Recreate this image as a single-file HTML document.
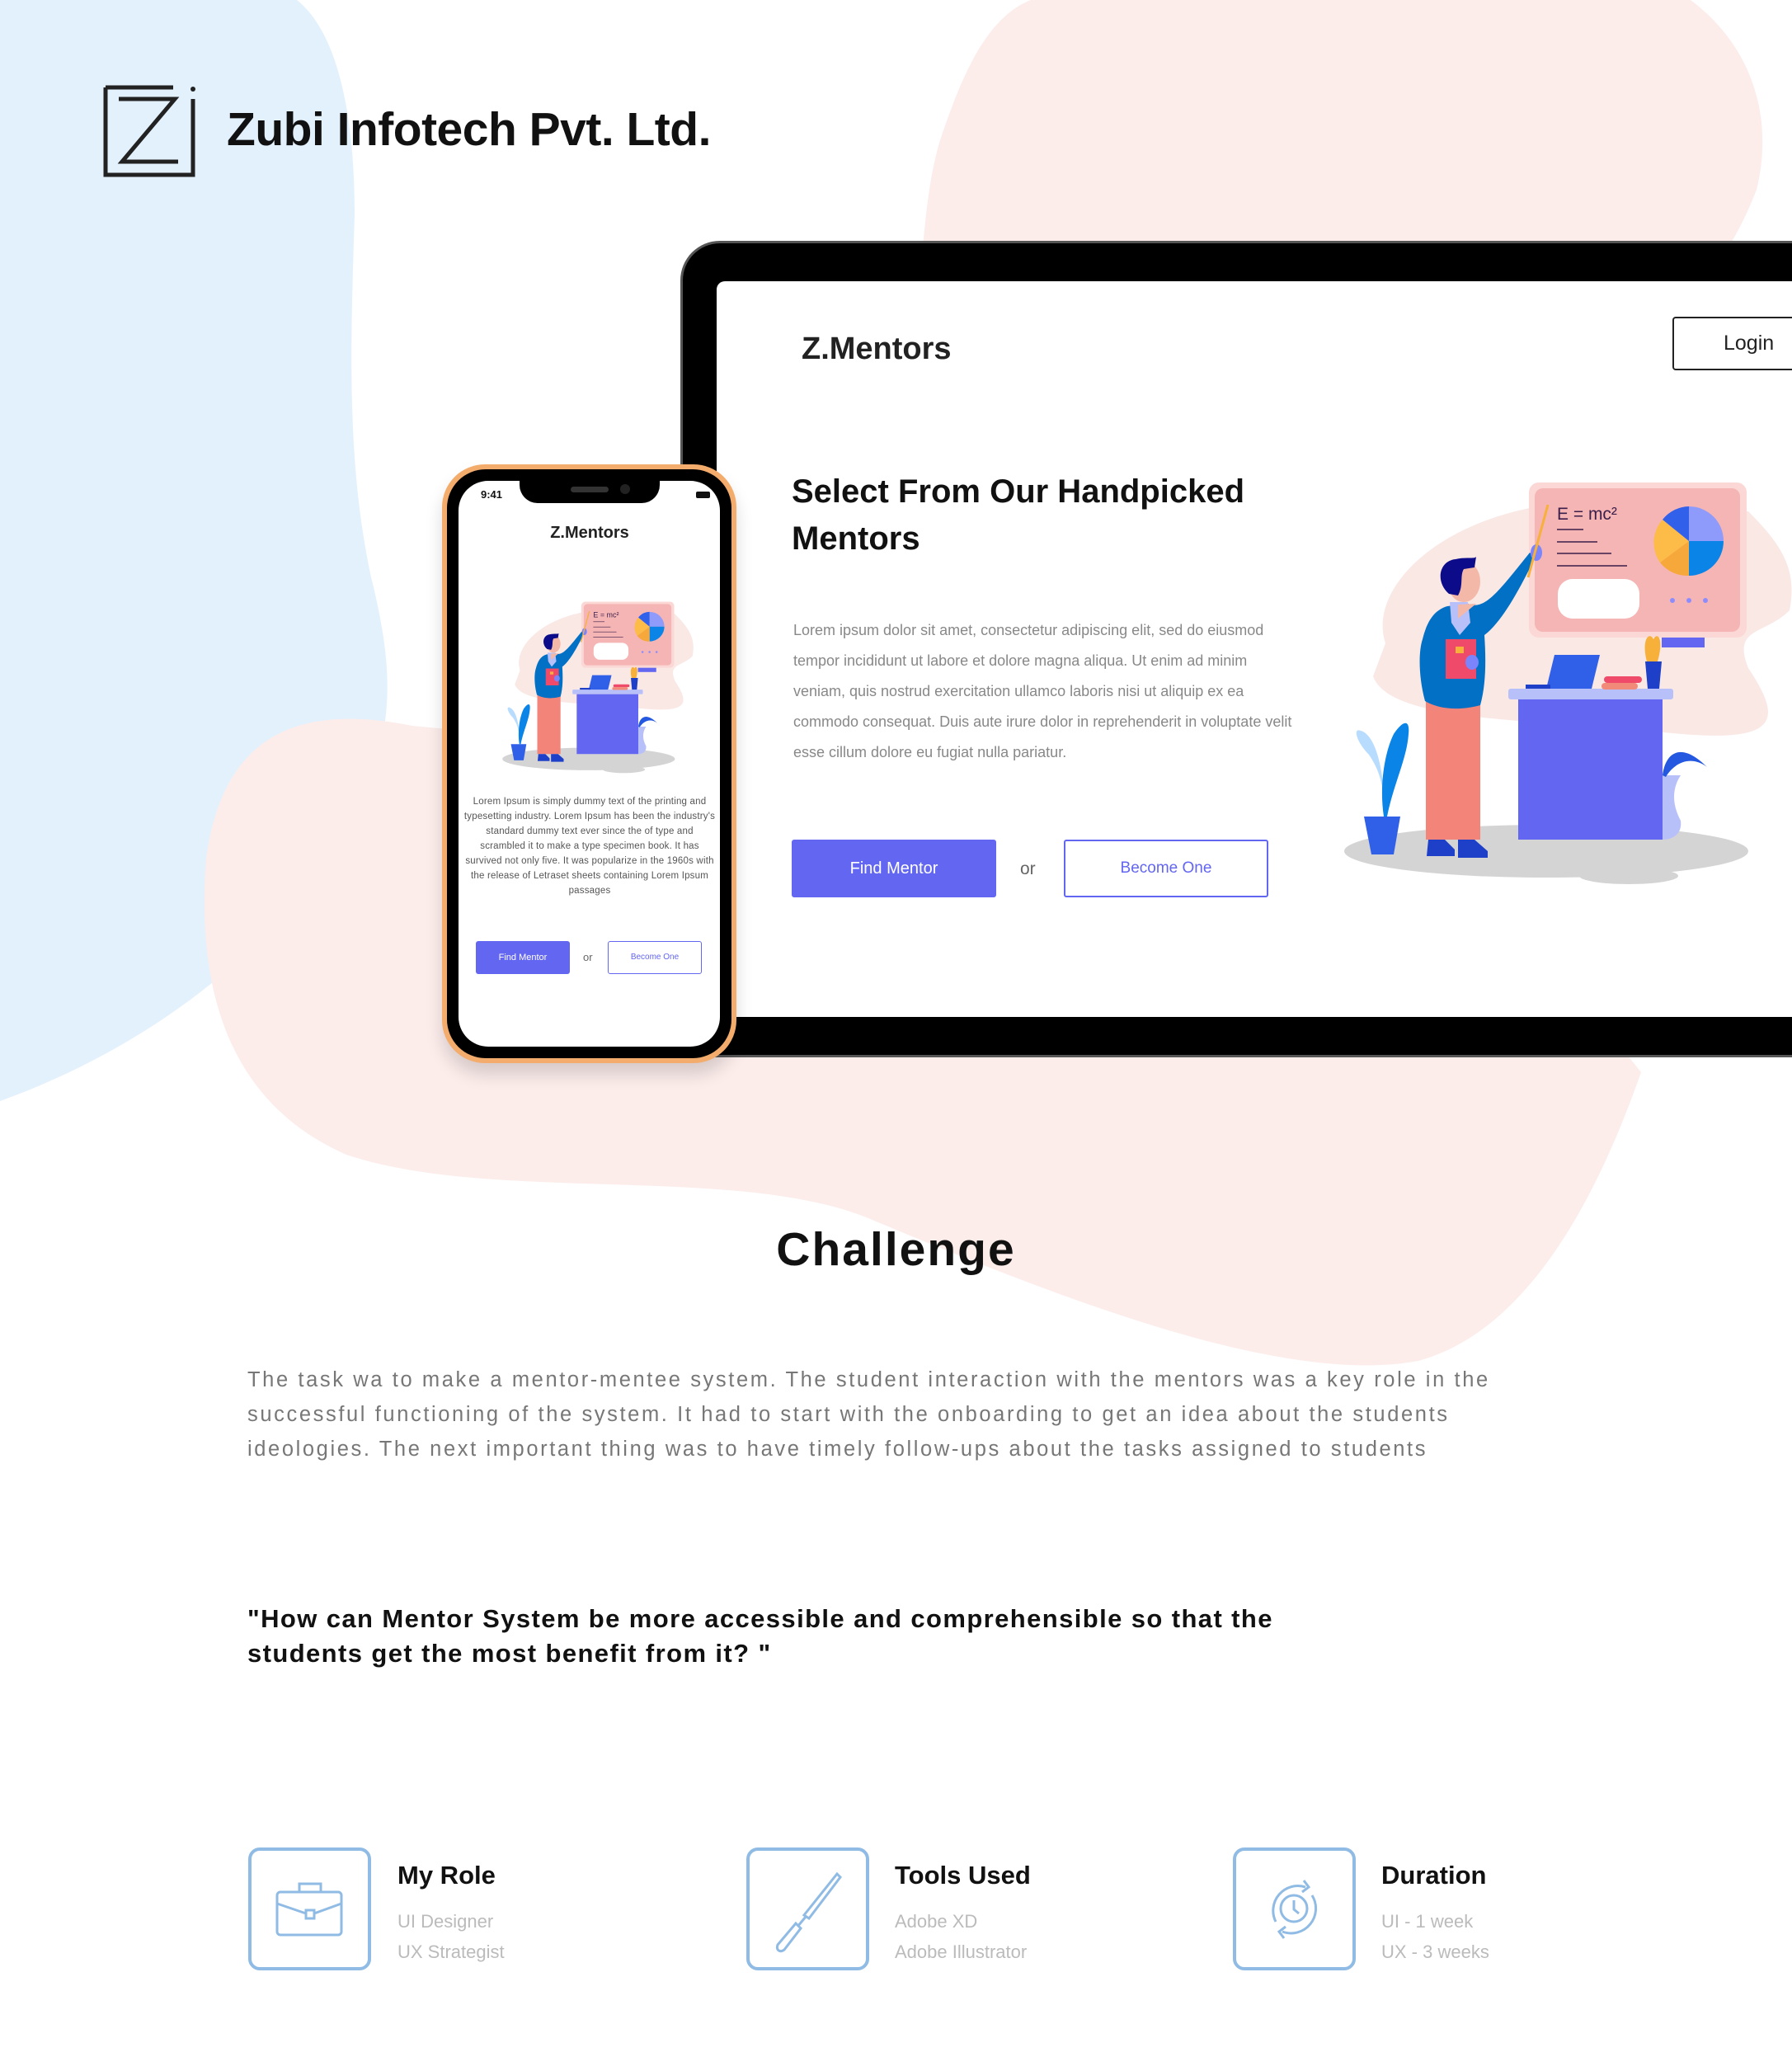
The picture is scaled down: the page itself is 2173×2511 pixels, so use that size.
<!DOCTYPE html>
<html><head><meta charset="utf-8">
<style>
*{margin:0;padding:0;box-sizing:border-box}
body{width:2173px;height:2511px;position:relative;overflow:hidden;background:#fff;font-family:"Liberation Sans",sans-serif;color:#111}
.a{position:absolute}
</style></head><body>
<svg class="a" style="left:0;top:0" width="2173" height="2511" viewBox="0 0 2173 2511">
<path d="M0 0 L360 0 C410 40 430 140 430 260 C425 420 420 560 450 700 C480 820 480 900 420 1000 C340 1150 180 1270 0 1335 Z" fill="#e3f1fd"/>
<path d="M1250 0 L2050 0 C2130 60 2150 150 2130 230 C2080 360 1990 420 1950 470 L1950 1250 L1990 1300 C1920 1500 1830 1620 1720 1650 C1560 1680 1300 1580 1060 1480 C900 1410 600 1460 420 1400 C260 1330 240 1170 250 1040 C270 900 350 850 500 880 C700 900 900 900 1080 860 C1120 600 1100 300 1140 170 C1170 80 1200 20 1250 0 Z" fill="#fcedeb"/>
</svg>

<svg class="a" style="left:122px;top:100px" width="118" height="118" viewBox="0 0 118 118">
<path d="M6 6 H88 M6 6 V112 H112 V20" fill="none" stroke="#222" stroke-width="5"/>
<circle cx="112" cy="8" r="3" fill="#222"/>
<path d="M22 20 H90 L26 96 H94" fill="none" stroke="#222" stroke-width="5"/>
</svg>
<div class="a" style="left:275px;top:124px;font-size:57px;font-weight:700;letter-spacing:-0.5px">Zubi Infotech Pvt. Ltd.</div>

<svg width="0" height="0" style="position:absolute">
<symbol id="ill" viewBox="0 0 553 520">
<ellipse cx="255" cy="462" rx="245" ry="32" fill="#d4d4d4"/>
<ellipse cx="355" cy="492" rx="60" ry="10" fill="#d4d4d4"/>
<path d="M60 210 C40 150 110 70 240 45 L500 50 C540 90 560 120 550 170 C520 200 480 190 500 240 C540 300 540 330 420 320 L280 308 C150 300 60 290 45 250 Z" fill="#fae8e5"/>
<rect x="234" y="15" width="264" height="188" rx="12" fill="#fbd8d5"/>
<rect x="241" y="22" width="249" height="174" rx="10" fill="#f5b5b5"/>
<text x="268" y="60" font-family="Liberation Sans" font-size="21" fill="#3b1f4a">E = mc²</text>
<path d="M268 72H300M268 87H317M268 101H334M268 116H353" stroke="#3b1f4a" stroke-width="1.5"/>
<rect x="269" y="132" width="99" height="48" rx="18" fill="#fff"/>
<circle cx="408" cy="158" r="3" fill="#8c8cff"/><circle cx="428" cy="158" r="3" fill="#8c8cff"/><circle cx="448" cy="158" r="3" fill="#8c8cff"/>
<path d="M428 86 L428 44 A42 42 0 0 1 470 86 Z" fill="#8e9bfa"/>
<path d="M428 86 L470 86 A42 42 0 0 1 428 128 Z" fill="#0a84e6"/>
<path d="M428 86 L428 128 A42 42 0 0 1 393 112 Z" fill="#f7a83a"/>
<path d="M428 86 L393 112 A42 42 0 0 1 396 60 Z" fill="#fdbb48"/>
<path d="M428 86 L396 60 A42 42 0 0 1 428 44 Z" fill="#3160ea"/>
<rect x="395" y="203" width="52" height="12" fill="#6366f1"/>
<path d="M377 232 C370 205 380 195 385 205 C390 195 398 205 390 232 Z" fill="#f7b03a"/>
<rect x="209" y="265" width="200" height="13" rx="3" fill="#b8c0fa"/>
<rect x="221" y="278" width="175" height="170" fill="#6366f1"/>
<path d="M396 370 L418 370 C405 390 410 410 418 425 C420 440 410 448 396 448 Z" fill="#b8c0fa"/>
<path d="M396 370 C400 340 420 330 450 360 C430 345 410 355 400 372 Z" fill="#2458e0"/>
<polygon points="265,224 320,224 310,265 255,265" fill="#3060e8"/>
<rect x="230" y="260" width="30" height="5" fill="#1e40c8"/>
<rect x="325" y="250" width="46" height="8" rx="4" fill="#f04a6a"/>
<rect x="322" y="258" width="44" height="8" rx="4" fill="#f28a7a"/>
<polygon points="375,232 395,232 392,265 378,265" fill="#1e40c8"/>
<rect x="109" y="280" width="66" height="168" fill="#f28479"/>
<path d="M112 448 h20 l12 12 v8 h-34 z M148 448 h20 l16 14 v8 h-36 z" fill="#1e40c8"/>
<path d="M135 165 L160 162 C180 170 195 150 235 100 L242 105 C220 150 200 185 180 200 C182 230 182 260 175 285 C150 292 125 290 108 280 C100 250 100 220 105 205 C110 185 118 170 135 165 Z" fill="#0270c4"/>
<rect x="133" y="205" width="37" height="48" fill="#f04a6a"/>
<rect x="145" y="214" width="10" height="8" fill="#f7b03a"/>
<ellipse cx="165" cy="233" rx="8" ry="9" fill="#7b84fa"/>
<ellipse cx="243" cy="100" rx="7" ry="10" fill="#7b84fa"/>
<path d="M257 42 L233 130" stroke="#f7b03a" stroke-width="3"/>
<path d="M138 160 L160 160 L163 185 L150 200 L140 185 Z" fill="#b8c0fa"/>
<path d="M148 163 L148 180 L170 162 Z" fill="#f4b8a8"/>
<ellipse cx="155" cy="135" rx="20" ry="25" fill="#f4b8a8"/>
<path d="M137 150 C120 135 125 110 145 108 C158 105 168 108 170 105 L168 118 L155 120 C150 128 155 140 148 152 Z" fill="#0c0c8a"/>
<polygon points="34,420 78,420 70,466 43,466" fill="#3060e8"/>
<path d="M58 420 C60 380 50 360 40 345 C25 330 20 312 30 316 C45 320 55 350 58 390 Z" fill="#b8dcfd"/>
<path d="M58 420 C52 380 60 340 70 320 C80 305 90 300 88 320 C86 350 70 380 62 420 Z" fill="#0a84e6"/>
</symbol>
</svg>

<div class="a" style="left:825px;top:292px;width:1400px;height:990px;background:#000;border-radius:48px 0 0 0;border:3px solid #555;border-right:none"></div>
<div class="a" style="left:869px;top:341px;width:1304px;height:892px;background:#fff;border-radius:10px 0 0 0"></div>
<div class="a" style="left:972px;top:402px;font-size:38px;font-weight:700;color:#222">Z.Mentors</div>
<div class="a" style="left:2028px;top:384px;width:160px;height:65px;border:2px solid #222;border-radius:4px;font-size:25px;line-height:61px;padding-left:60px;color:#222">Login</div>
<div class="a" style="left:960px;top:568px;font-size:40px;font-weight:700;line-height:57px;color:#111">Select From Our Handpicked<br>Mentors</div>
<div class="a" style="left:962px;top:746px;width:640px;font-size:18px;line-height:37px;color:#888">Lorem ipsum dolor sit amet, consectetur adipiscing elit, sed do eiusmod<br>tempor incididunt ut labore et dolore magna aliqua. Ut enim ad minim<br>veniam, quis nostrud exercitation ullamco laboris nisi ut aliquip ex ea<br>commodo consequat. Duis aute irure dolor in reprehenderit in voluptate velit<br>esse cillum dolore eu fugiat nulla pariatur.</div>
<div class="a" style="left:960px;top:1018px;width:248px;height:70px;background:#6366f1;border-radius:3px;color:#fff;font-size:20px;line-height:70px;text-align:center">Find Mentor</div>
<div class="a" style="left:1237px;top:1042px;font-size:21px;color:#666">or</div>
<div class="a" style="left:1290px;top:1018px;width:248px;height:70px;border:2px solid #6366f1;border-radius:3px;color:#6366f1;font-size:19px;line-height:66px;text-align:center">Become One</div>
<svg class="a" style="left:1620px;top:570px" width="553" height="520"><use href="#ill"/></svg>

<div class="a" style="left:536px;top:563px;width:357px;height:726px;background:#f4ac6c;border-radius:52px;box-shadow:0 14px 20px rgba(0,0,0,.15)"></div>
<div class="a" style="left:542px;top:569px;width:345px;height:714px;background:#000;border-radius:47px"></div>
<div class="a" style="left:556px;top:583px;width:317px;height:686px;background:#fff;border-radius:36px"></div>
<div class="a" style="left:630px;top:575px;width:170px;height:35px;background:#000;border-radius:0 0 22px 22px"></div>
<div class="a" style="left:692px;top:590px;width:46px;height:7px;background:#333;border-radius:4px"></div>
<div class="a" style="left:752px;top:587px;width:12px;height:12px;background:#222;border-radius:50%"></div>
<div class="a" style="left:583px;top:592px;font-size:13px;font-weight:700">9:41</div>
<div class="a" style="left:844px;top:596px;width:17px;height:8px;border:1.5px solid #111;border-radius:2px;background:#111"></div>
<div class="a" style="left:660px;top:635px;width:110px;text-align:center;font-size:20px;font-weight:700;color:#222">Z.Mentors</div>
<svg class="a" style="left:605px;top:723px" width="236" height="222" viewBox="0 0 553 520"><use href="#ill"/></svg>
<div class="a" style="left:562px;top:963px;width:306px;text-align:center;font-size:11.5px;line-height:18px;color:#555;letter-spacing:0.2px">Lorem Ipsum is simply dummy text of the printing and typesetting industry. Lorem Ipsum has been the industry's standard dummy text ever since the of type and scrambled it to make a type specimen book. It has survived not only five. It was popularize in the 1960s with the release of Letraset sheets containing Lorem Ipsum passages</div>
<div class="a" style="left:577px;top:1141px;width:114px;height:40px;background:#6366f1;border-radius:3px;color:#fff;font-size:11px;line-height:40px;text-align:center">Find Mentor</div>
<div class="a" style="left:707px;top:1153px;font-size:13px;color:#666">or</div>
<div class="a" style="left:737px;top:1141px;width:114px;height:40px;border:1.5px solid #6366f1;border-radius:3px;color:#6366f1;font-size:10px;line-height:37px;text-align:center">Become One</div>

<div class="a" style="left:0;top:1482px;width:2173px;text-align:center;font-size:57px;font-weight:700;letter-spacing:2px">Challenge</div>
<div class="a" style="left:300px;top:1652px;width:1560px;font-size:25.5px;line-height:42px;color:#777;letter-spacing:2.6px;white-space:nowrap">The task wa to make a mentor-mentee system. The student interaction with the mentors was a key role in the<br>successful functioning of the system. It had to start with the onboarding to get an idea about the students<br>ideologies. The next important thing was to have timely follow-ups about the tasks assigned to students</div>
<div class="a" style="left:300px;top:1942px;width:1700px;font-size:31px;line-height:42px;font-weight:700;letter-spacing:1.4px;white-space:nowrap">"How can Mentor System be more accessible and comprehensible so that the<br>students get the most benefit from it? "</div>

<div class="a" style="left:301px;top:2240px;width:149px;height:149px;border:4px solid #8fbbe4;border-radius:14px"></div>
<svg class="a" style="left:301px;top:2240px" width="149" height="149" viewBox="0 0 149 149" fill="none" stroke="#8fbbe4" stroke-width="3">
<rect x="35" y="54" width="78" height="52" rx="4"/><path d="M62 54 V44 H88 V54 M35 68 L70 80 M80 80 L113 68"/><rect x="70" y="76" width="10" height="10"/></svg>
<div class="a" style="left:482px;top:2256px;font-size:31px;font-weight:700">My Role</div>
<div class="a" style="left:482px;top:2311px;font-size:22px;line-height:37px;color:#bbb">UI Designer<br>UX Strategist</div>

<div class="a" style="left:905px;top:2240px;width:149px;height:149px;border:4px solid #8fbbe4;border-radius:14px"></div>
<svg class="a" style="left:905px;top:2240px" width="149" height="149" viewBox="0 0 149 149" fill="none" stroke="#8fbbe4" stroke-width="3">
<path d="M110 32 L114 36 L76 86 L70 82 Z M72 84 L62 96 M60 92 L66 98 L46 124 C40 128 36 124 38 118 Z"/></svg>
<div class="a" style="left:1085px;top:2256px;font-size:31px;font-weight:700">Tools Used</div>
<div class="a" style="left:1085px;top:2311px;font-size:22px;line-height:37px;color:#bbb">Adobe XD<br>Adobe Illustrator</div>

<div class="a" style="left:1495px;top:2240px;width:149px;height:149px;border:4px solid #8fbbe4;border-radius:14px"></div>
<svg class="a" style="left:1495px;top:2240px" width="149" height="149" viewBox="0 0 149 149" fill="none" stroke="#8fbbe4" stroke-width="3">
<path d="M52 90 A30 30 0 0 1 88 48 M96 58 A30 30 0 0 1 60 102 M86 40 L92 48 L84 54 M62 110 L56 102 L64 96"/><circle cx="74" cy="74" r="16"/><path d="M74 64 V75 L80 80"/></svg>
<div class="a" style="left:1675px;top:2256px;font-size:31px;font-weight:700">Duration</div>
<div class="a" style="left:1675px;top:2311px;font-size:22px;line-height:37px;color:#bbb">UI - 1 week<br>UX - 3 weeks</div>
</body></html>
